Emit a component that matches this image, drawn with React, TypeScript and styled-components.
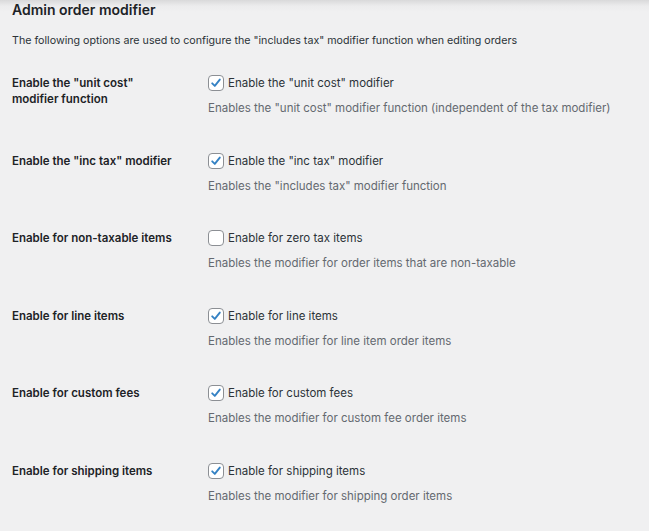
import React from "react";
import styled, { createGlobalStyle } from "styled-components";

const GlobalStyle = createGlobalStyle`
  html, body {
    margin: 0;
    padding: 0;
    background: #f0f0f1;
  }
  body {
    font-family: Inter, "Noto Sans", sans-serif;
    color: #1d2327;
  }
`;

type Option = {
  label: string[];
  control: string;
  description: string;
  checked: boolean;
};

const OPTIONS: Option[] = [
  {
    label: ['Enable the "unit cost"', "modifier function"],
    control: 'Enable the "unit cost" modifier',
    description: 'Enables the "unit cost" modifier function (independent of the tax modifier)',
    checked: true,
  },
  {
    label: ['Enable the "inc tax" modifier'],
    control: 'Enable the "inc tax" modifier',
    description: 'Enables the "includes tax" modifier function',
    checked: true,
  },
  {
    label: ["Enable for non-taxable items"],
    control: "Enable for zero tax items",
    description: "Enables the modifier for order items that are non-taxable",
    checked: false,
  },
  {
    label: ["Enable for line items"],
    control: "Enable for line items",
    description: "Enables the modifier for line item order items",
    checked: true,
  },
  {
    label: ["Enable for custom fees"],
    control: "Enable for custom fees",
    description: "Enables the modifier for custom fee order items",
    checked: true,
  },
  {
    label: ["Enable for shipping items"],
    control: "Enable for shipping items",
    description: "Enables the modifier for shipping order items",
    checked: true,
  },
];

const Page = styled.div`
  min-height: 531px;
  padding: 0 12px;
  background: linear-gradient(to bottom, #d9d9da 0, #ececed 6px, #f0f0f1 12px);
`;

const Title = styled.h2`
  margin: 0;
  padding-top: 0;
  font-size: 14px;
  font-weight: 600;
  line-height: 20px;
  color: #1d2327;
`;

const Intro = styled.p`
  margin: 13px 0 0;
  font-size: 10.7px;
  line-height: 16px;
  color: #2c3338;
`;

const Table = styled.div`
  margin-top: 8px;
  display: flex;
  flex-direction: column;
`;

const Row = styled.div`
  display: flex;
  padding: 17px 0 17.6px;
`;

const Label = styled.div`
  width: 196px;
  flex-shrink: 0;
  font-size: 11.5px;
  font-weight: 600;
  line-height: 16px;
  padding-top: 1px;
  color: #1d2327;
`;

const Field = styled.div`
  display: flex;
  flex-direction: column;
  gap: 7px;
`;

const CheckLine = styled.label`
  display: flex;
  align-items: center;
  gap: 4px;
  height: 18px;
  font-size: 11.5px;
  color: #2c3338;
`;

const Box = styled.span`
  width: 14px;
  height: 14px;
  border: 1px solid #8c8f94;
  border-radius: 4px;
  background: #fff;
  display: flex;
  align-items: center;
  justify-content: center;
  box-sizing: content-box;
`;

const Description = styled.div`
  font-size: 11.5px;
  line-height: 18px;
  color: #646970;
`;

const Check = () => (
  <svg width="12" height="12" viewBox="0 0 12 12">
    <path d="M2.2 6.3 L4.8 8.9 L9.8 2.6" fill="none" stroke="#3582c4" strokeWidth="1.9" strokeLinecap="round" strokeLinejoin="round" />
  </svg>
);

export default function App() {
  return (
    <Page>
      <GlobalStyle />
      <Title>Admin order modifier</Title>
      <Intro>The following options are used to configure the "includes tax" modifier function when editing orders</Intro>
      <Table>
        {OPTIONS.map((o, i) => (
          <Row key={i}>
            <Label>
              {o.label.map((l, j) => (
                <div key={j}>{l}</div>
              ))}
            </Label>
            <Field>
              <CheckLine>
                <Box>{o.checked && <Check />}</Box>
                {o.control}
              </CheckLine>
              <Description>{o.description}</Description>
            </Field>
          </Row>
        ))}
      </Table>
    </Page>
  );
}
